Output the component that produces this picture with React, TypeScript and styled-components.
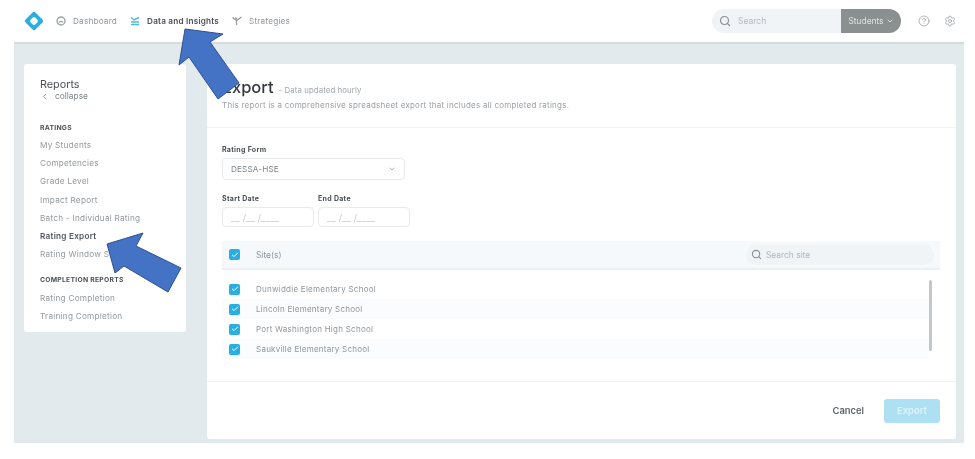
import React from "react";
import styled, { createGlobalStyle } from "styled-components";
import { Check, ChevronDown, ChevronLeft, CircleHelp, Search, Settings } from "lucide-react";

const GlobalStyle = createGlobalStyle`
    html, body {
        margin: 0;
        background: #fff;
    }
    * {
        box-sizing: border-box;
    }
`

const Page = styled.div`
    position: relative;
    width: 975px;
    height: 459px;
    overflow: hidden;
    padding: 0 11px 16px 14px;
    display: flex;
    flex-direction: column;
    font-family: Inter, "Open Sans", sans-serif;
    color: #8b9197;
`

const Blurred = styled.div`
    flex: 1;
    display: flex;
    flex-direction: column;
    filter: blur(0.55px);
`

const Header = styled.header`
    height: 44px;
    flex: none;
    display: flex;
    align-items: center;
    padding: 0 8px 0 9px;
    background: #fff;
    border-bottom: 2px solid #d5dcdf;
`

const Logo = styled.svg`
    width: 22px;
    height: 22px;
    margin-right: 11px;
`

const NavItem = styled.div<{ $active?: boolean }>`
    display: flex;
    align-items: center;
    gap: 7px;
    margin-right: 13px;
    font-size: 8.2px;
    letter-spacing: 0.2px;
    font-weight: ${(p) => (p.$active ? 600 : 400)};
    color: ${(p) => (p.$active ? "#4b5058" : "#8f959a")};
    svg {
        width: 10px;
        height: 10px;
    }
`

const TopRight = styled.div`
    margin-left: auto;
    display: flex;
    align-items: center;
    color: #9aa1a6;
`

const GlobalSearch = styled.div`
    width: 189px;
    height: 24px;
    border-radius: 12px;
    overflow: hidden;
    display: flex;
    background: #f0f4f7;
    margin-right: 3px;
`

const SearchField = styled.div`
    flex: 1;
    display: flex;
    align-items: center;
    gap: 7px;
    padding-left: 7px;
    font-size: 8.5px;
    color: #b4bbc0;
    svg {
        color: #899197;
    }
`

const ScopeButton = styled.div`
    width: 60px;
    display: flex;
    align-items: center;
    justify-content: center;
    gap: 2px;
    background: #8a8f8f;
    color: #dfe3e3;
    font-size: 8.4px;
`

const TopIcon = styled.div`
    display: flex;
    margin-left: 14px;
`

const Body = styled.main`
    flex: 1;
    display: flex;
    align-items: flex-start;
    gap: 21px;
    padding: 20px 8px 4px 10px;
    background: #e3eaee;
`

const SideBar = styled.aside`
    width: 162px;
    height: 268px;
    flex: none;
    padding: 14px 16px 0;
    background: #fff;
    border-radius: 3px;
`

const SideTitle = styled.div`
    font-size: 10.8px;
    line-height: 13px;
    color: #4b5058;
`

const Collapse = styled.div`
    display: flex;
    align-items: center;
    gap: 6px;
    margin-bottom: 17px;
    font-size: 8.4px;
    line-height: 11px;
    color: #7f858b;
`

const SideHeading = styled.div<{ $spaced?: boolean }>`
    margin-top: ${(p) => (p.$spaced ? "7.5px" : "0")};
    margin-bottom: ${(p) => (p.$spaced ? "0" : "-1px")};
    font-size: 6.8px;
    line-height: 18px;
    font-weight: 700;
    letter-spacing: 0.25px;
    color: #4b5058;
`

const SideLink = styled.div<{ $active?: boolean }>`
    font-size: 8.2px;
    line-height: 18.2px;
    letter-spacing: 0.25px;
    white-space: nowrap;
    font-weight: ${(p) => (p.$active ? 600 : 400)};
    color: ${(p) => (p.$active ? "#50545c" : "#92989d")};
`

const Panel = styled.section`
    flex: 1;
    height: 375px;
    display: flex;
    flex-direction: column;
    background: #fff;
    border-radius: 3px;
`

const PanelHead = styled.div`
    height: 64px;
    padding: 13px 15px 0;
    border-bottom: 1px solid #f0f3f5;
`

const TitleRow = styled.div`
    display: flex;
    align-items: baseline;
    gap: 5px;
    line-height: 20px;
`

const Title = styled.h1`
    margin: 0;
    font-size: 16.5px;
    font-weight: 500;
    color: #33383f;
`

const Updated = styled.span`
    font-size: 7.8px;
    letter-spacing: 0.1px;
    color: #a0a6ab;
`

const Description = styled.p`
    margin: 0;
    font-size: 8px;
    line-height: 10px;
    letter-spacing: 0.24px;
    white-space: nowrap;
    color: #9aa0a5;
`

const Form = styled.div`
    flex: 1;
    padding: 17px 16px 0 15px;
`

const Label = styled.div`
    font-size: 7px;
    line-height: 9px;
    font-weight: 700;
    letter-spacing: 0.3px;
    color: #4b5058;
    margin-bottom: 4px;
`

const Select = styled.div`
    width: 183px;
    height: 22px;
    display: flex;
    align-items: center;
    justify-content: space-between;
    padding: 0 8px;
    border: 1px solid #e7ebee;
    border-radius: 4px;
    font-size: 8.2px;
    letter-spacing: 0.12px;
    color: #7c8288;
`

const DateRow = styled.div`
    display: flex;
    gap: 4px;
    margin-top: 14px;
`

const DateField = styled.div`
    width: 92px;
`

const DateInput = styled.div`
    height: 20px;
    display: flex;
    align-items: center;
    padding-left: 8px;
    border: 1px solid #e7ebee;
    border-radius: 4px;
    font-size: 9px;
    letter-spacing: 0.3px;
    white-space: pre;
    color: #c2c8cc;
`

const SitesHead = styled.div`
    height: 29px;
    margin-top: 14px;
    display: flex;
    align-items: center;
    padding: 0 6px 0 7px;
    background: #f6f9fb;
    border-bottom: 2px solid #ebf0f3;
    font-size: 8.4px;
    color: #8f959a;
`

const Box = styled.span`
    width: 11px;
    height: 11px;
    flex: none;
    display: flex;
    align-items: center;
    justify-content: center;
    margin-right: 16px;
    border-radius: 2px;
    background: #29aee2;
    color: #fff;
`

const SiteSearch = styled.div`
    width: 188px;
    height: 20px;
    margin-left: auto;
    display: flex;
    align-items: center;
    gap: 4px;
    padding-left: 5px;
    border-radius: 10px;
    background: #f0f4f7;
    color: #b0b7bc;
    svg {
        color: #899197;
    }
`

const SiteArea = styled.div`
    display: flex;
    padding: 9px 0 0;
`

const SiteList = styled.div`
    flex: 1;
`

const SiteRow = styled.div<{ $shaded: boolean }>`
    height: 20px;
    display: flex;
    align-items: center;
    padding-left: 7px;
    background: ${(p) => (p.$shaded ? "#fbfcfd" : "#fff")};
    font-size: 8px;
    letter-spacing: 0.25px;
    color: #8f959a;
`

const Scroll = styled.div`
    width: 3px;
    height: 71px;
    margin: 1px 8px 0 0;
    border-radius: 2px;
    background: #c4c7ca;
`

const Footer = styled.div`
    height: 58px;
    flex: none;
    display: flex;
    align-items: center;
    justify-content: flex-end;
    gap: 20px;
    padding-right: 16px;
    border-top: 1px solid #f0f3f5;
`

const Cancel = styled.div`
    font-size: 9.4px;
    font-weight: 600;
    color: #5d636a;
`

const ExportButton = styled.div`
    width: 56px;
    height: 24px;
    display: flex;
    align-items: center;
    justify-content: center;
    border-radius: 3px;
    background: #aee0f3;
    color: #dff3fa;
    font-size: 9.4px;
    font-weight: 600;
`

const Arrows = styled.svg`
    position: absolute;
    left: 0;
    top: 0;
    width: 975px;
    height: 459px;
    pointer-events: none;
`

const ratingLinks = [
    "My Students",
    "Competencies",
    "Grade Level",
    "Impact Report",
    "Batch - Individual Rating",
    "Rating Export",
    "Rating Window Status",
]

const sites = [
    "Dunwiddie Elementary School",
    "Lincoln Elementary School",
    "Port Washington High School",
    "Saukville Elementary School",
]

const Checked: React.FC = () => (
    <Box>
        <Check size={8} strokeWidth={3} />
    </Box>
)

export default function App() {
    return (
        <Page>
            <GlobalStyle />
            <Blurred>
                <Header>
                    <Logo viewBox="0 0 22 22">
                        <rect x="4" y="4" width="14" height="14" rx="2" transform="rotate(45 11 11)" fill="#29aee2" />
                        <rect x="7.6" y="7.6" width="6.8" height="6.8" rx="2.4" transform="rotate(45 11 11)" fill="#fff" />
                    </Logo>
                    <NavItem>
                        <svg viewBox="0 0 10 10" fill="none" stroke="#9aa1a6" strokeWidth="1.3">
                            <circle cx="5" cy="5" r="4" />
                            <path d="M3 6.5 A2.4 2.4 0 0 1 7 6.5" />
                        </svg>
                        Dashboard
                    </NavItem>
                    <NavItem $active>
                        <svg viewBox="0 0 10 10" fill="none" stroke="#4fb9e6" strokeWidth="1.4">
                            <path d="M1 1.5 L4 4 L9 1.5" />
                            <path d="M1 6 H9 M1 8.5 H9" />
                        </svg>
                        Data and Insights
                    </NavItem>
                    <NavItem>
                        <svg viewBox="0 0 10 10" fill="none" stroke="#8f959a" strokeWidth="1.2">
                            <path d="M0.5 1.5 L4.5 4.5 M9.5 1 L4.5 4.5 M4.5 4.5 V9" />
                            <path d="M3 1.5 L5 3" />
                        </svg>
                        Strategies
                    </NavItem>
                    <TopRight>
                        <GlobalSearch>
                            <SearchField>
                                <Search size={12} strokeWidth={2.4} />
                                Search
                            </SearchField>
                            <ScopeButton>
                                Students
                                <ChevronDown size={8} strokeWidth={3} />
                            </ScopeButton>
                        </GlobalSearch>
                        <TopIcon>
                            <CircleHelp size={12} strokeWidth={1.6} />
                        </TopIcon>
                        <TopIcon>
                            <Settings size={12} strokeWidth={1.6} />
                        </TopIcon>
                    </TopRight>
                </Header>
                <Body>
                    <SideBar>
                        <SideTitle>Reports</SideTitle>
                        <Collapse>
                            <ChevronLeft size={9} />
                            collapse
                        </Collapse>
                        <SideHeading>RATINGS</SideHeading>
                        {ratingLinks.map((name) => (
                            <SideLink key={name} $active={name === "Rating Export"}>
                                {name}
                            </SideLink>
                        ))}
                        <SideHeading $spaced>COMPLETION REPORTS</SideHeading>
                        <SideLink>Rating Completion</SideLink>
                        <SideLink>Training Completion</SideLink>
                    </SideBar>
                    <Panel>
                        <PanelHead>
                            <TitleRow>
                                <Title>Export</Title>
                                <Updated>- Data updated hourly</Updated>
                            </TitleRow>
                            <Description>
                                This report is a comprehensive spreadsheet export that includes all completed ratings.
                            </Description>
                        </PanelHead>
                        <Form>
                            <Label>Rating Form</Label>
                            <Select>
                                DESSA-HSE
                                <ChevronDown size={8} color="#8f959a" />
                            </Select>
                            <DateRow>
                                <DateField>
                                    <Label>Start Date</Label>
                                    <DateInput>__ /__ /____</DateInput>
                                </DateField>
                                <DateField>
                                    <Label>End Date</Label>
                                    <DateInput>__ /__ /____</DateInput>
                                </DateField>
                            </DateRow>
                            <SitesHead>
                                <Checked />
                                Site(s)
                                <SiteSearch>
                                    <Search size={11} strokeWidth={2.4} />
                                    Search site
                                </SiteSearch>
                            </SitesHead>
                            <SiteArea>
                                <SiteList>
                                    {sites.map((site, idx) => (
                                        <SiteRow key={site} $shaded={idx % 2 === 1}>
                                            <Checked />
                                            {site}
                                        </SiteRow>
                                    ))}
                                </SiteList>
                                <Scroll />
                            </SiteArea>
                        </Form>
                        <Footer>
                            <Cancel>Cancel</Cancel>
                            <ExportButton>Export</ExportButton>
                        </Footer>
                    </Panel>
                </Body>
            </Blurred>
            <Arrows viewBox="0 0 975 459">
                <polygon
                    points="185,29 223,34 210,42 239,83 218,99 189,57 179,65"
                    fill="#4472c4"
                    stroke="#2f528f"
                    strokeWidth="1"
                />
                <polygon
                    points="107,244 143,233 136,246 181,268 168,292 124,266 115,273"
                    fill="#4472c4"
                    stroke="#2f528f"
                    strokeWidth="1"
                />
            </Arrows>
        </Page>
    )
}
